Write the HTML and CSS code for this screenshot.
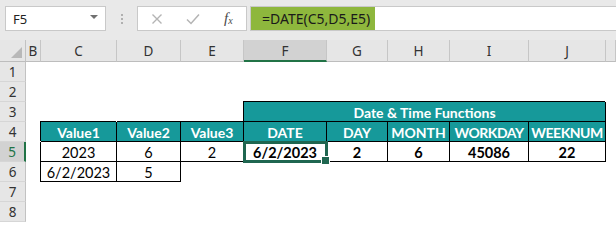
FILE: index.html
```html
<!DOCTYPE html>
<html>
<head>
<meta charset="utf-8">
<link rel="stylesheet" href="styles.css">
</head>
<body>
<div class="toolbar">
  <div class="namebox"><span>F5</span><span class="caret"></span></div>
  <div class="grip"><i></i><i></i><i></i></div>
  <div class="fxbox">
    <svg class="ico" width="12" height="12" viewBox="0 0 12 12"><path d="M1.5 1.5 L10.5 10.5 M10.5 1.5 L1.5 10.5" stroke="#b4b4b4" stroke-width="1.4" fill="none"/></svg>
    <svg class="ico" width="14" height="12" viewBox="0 0 14 12"><path d="M1 6.5 L5 10.5 L13 1.5" stroke="#b4b4b4" stroke-width="1.5" fill="none"/></svg>
    <span class="fx">f<sub>x</sub></span>
  </div>
  <div class="formula"><span class="ftext">=DATE(C5,D5,E5)</span></div>
</div>

<div class="sheet">
  <div class="corner"><svg width="26" height="21" viewBox="0 0 26 21"><polygon points="22,7 22,18 11,18" fill="#b8b8b8"/></svg></div>
  <div class="colh">B</div>
  <div class="colh">C</div>
  <div class="colh">D</div>
  <div class="colh">E</div>
  <div class="colh sel">F</div>
  <div class="colh">G</div>
  <div class="colh">H</div>
  <div class="colh">I</div>
  <div class="colh">J</div>
  <div class="colh"></div>

  <div class="rowh">1</div>
  <div></div><div></div><div></div><div></div><div></div><div></div><div></div><div></div><div></div><div></div>

  <div class="rowh">2</div>
  <div></div><div></div><div></div><div></div><div></div><div></div><div></div><div></div><div></div><div></div>

  <div class="rowh">3</div>
  <div></div><div></div><div></div><div></div>
  <div class="cell head merged">Date &amp; Time Functions</div>
  <div></div>

  <div class="rowh">4</div>
  <div></div>
  <div class="cell head top left">Value1</div>
  <div class="cell head top">Value2</div>
  <div class="cell head top">Value3</div>
  <div class="cell head">DATE</div>
  <div class="cell head">DAY</div>
  <div class="cell head">MONTH</div>
  <div class="cell head caps">WORKDAY</div>
  <div class="cell head caps">WEEKNUM</div>
  <div></div>

  <div class="rowh sel">5</div>
  <div></div>
  <div class="cell left">2023</div>
  <div class="cell">6</div>
  <div class="cell">2</div>
  <div class="cell bold active">6/2/2023</div>
  <div class="cell bold">2</div>
  <div class="cell bold">6</div>
  <div class="cell bold">45086</div>
  <div class="cell bold">22</div>
  <div></div>

  <div class="rowh">6</div>
  <div></div>
  <div class="cell left">6/2/2023</div>
  <div class="cell">5</div>
  <div></div><div></div><div></div><div></div><div></div><div></div><div></div>

  <div class="rowh">7</div>
  <div></div><div></div><div></div><div></div><div></div><div></div><div></div><div></div><div></div><div></div>

  <div class="rowh">8</div>
  <div></div><div></div><div></div><div></div><div></div><div></div><div></div><div></div><div></div><div></div>
</div>
</body>
</html>
```

FILE: styles.css
```css
* { box-sizing: border-box; }
html, body { margin: 0; padding: 0; }
body {
  width: 616px;
  height: 222px;
  overflow: hidden;
  background: #ffffff;
  font-family: "Noto Sans", "Open Sans", sans-serif;
}

/* ---------- formula bar ---------- */
.toolbar {
  height: 40px;
  background: #e9e9e9;
  display: flex;
  align-items: flex-start;
  padding: 6px 0 0 5px;
}
.namebox {
  width: 101px;
  height: 25px;
  background: #fff;
  border: 1px solid #c9c9c9;
  display: flex;
  align-items: center;
  justify-content: space-between;
  padding: 0 7px 0 7px;
  font-size: 13px;
  color: #222;
}
.caret {
  width: 0; height: 0;
  border-left: 4px solid transparent;
  border-right: 4px solid transparent;
  border-top: 4px solid #707070;
  margin-top: -3px;
}
.grip {
  width: 31px;
  height: 25px;
  display: flex;
  flex-direction: column;
  align-items: center;
  justify-content: center;
  gap: 2px;
}
.grip i {
  display: block;
  width: 2px; height: 2px;
  background: #b0b0b0;
}
.fxbox {
  width: 110px;
  height: 25px;
  background: #fff;
  border: 1px solid #c9c9c9;
  display: flex;
  align-items: center;
  padding-left: 13px;
}
.fxbox .ico:first-child { margin-right: 23px; }
.fxbox .ico:nth-child(2) { margin-right: 24px; }
.fx {
  font-family: "Liberation Serif", serif;
  font-style: italic;
  font-size: 15px;
  color: #4a4a4a;
  line-height: 1;
}
.fx sub { font-size: 10px; vertical-align: -1px; }
.formula {
  flex: 1;
  height: 25px;
  margin-left: 3px;
  background: #fff;
  border-top: 1px solid #c9c9c9;
  border-bottom: 1px solid #c9c9c9;
  border-left: 1px solid #c9c9c9;
  display: flex;
  align-items: stretch;
}
.ftext {
  width: 124px;
  background: #8eb73d;
  color: #1a1a1a;
  font-size: 14px;
  display: flex;
  align-items: center;
  padding-left: 11px;
}

/* ---------- grid ---------- */
.sheet {
  display: grid;
  grid-template-columns: 26px 15px 76px 64px 63px 83px 61px 62px 79px 77px 1fr;
  grid-template-rows: 22px repeat(8, 20px);
  font-family: "Lato", "Noto Sans", sans-serif;
  font-size: 14.5px;
  color: #000;
}
.corner {
  background: #e6e6e6;
  border-right: 1px solid #c2c2c2;
  border-bottom: 1px solid #bdbdbd;
}
.corner svg { display: block; }
.colh {
  background: #e6e6e6;
  border-right: 1px solid #c6c6c6;
  border-bottom: 1px solid #bdbdbd;
  font-family: "Noto Sans", sans-serif;
  font-size: 13.5px;
  color: #333;
  display: flex;
  align-items: center;
  justify-content: center;
  padding-top: 1px;
}
.colh.sel {
  background: #d2d2d2;
  border-bottom: 2px solid #217346;
}
.rowh {
  background: #e6e6e6;
  border-right: 1px solid #c2c2c2;
  border-bottom: 1px solid #d6d6d6;
  font-family: "Noto Sans", sans-serif;
  font-size: 13.5px;
  color: #333;
  display: flex;
  align-items: center;
  justify-content: center;
}
.rowh.sel {
  background: #d2d2d2;
  border-right: 2px solid #217346;
  color: #217346;
}

.cell {
  display: flex;
  align-items: center;
  justify-content: center;
  border-right: 1px solid #000;
  border-bottom: 1px solid #000;
  white-space: nowrap;
  padding-top: 1px;
}
.cell.head {
  background: #16999a;
  color: #fff;
  font-weight: 700;
  font-size: 14px;
}
.cell.head.caps { letter-spacing: -0.5px; }
.cell.bold { font-weight: 700; }
.cell.top { box-shadow: 0 -1px 0 #000; }
.cell.left { box-shadow: -1px 0 0 #000; }
.cell.top.left { box-shadow: -1px -1px 0 #000; }
.cell.merged {
  grid-column: span 5;
  box-shadow: -1px -1px 0 #000;
}
.cell.active {
  position: relative;
  outline: 3px solid #1f6650;
  outline-offset: -2px;
}
.cell.active::after {
  content: "";
  position: absolute;
  right: -4px;
  bottom: -4px;
  width: 7px;
  height: 7px;
  background: #1f6650;
  border: 1px solid #fff;
}
```
